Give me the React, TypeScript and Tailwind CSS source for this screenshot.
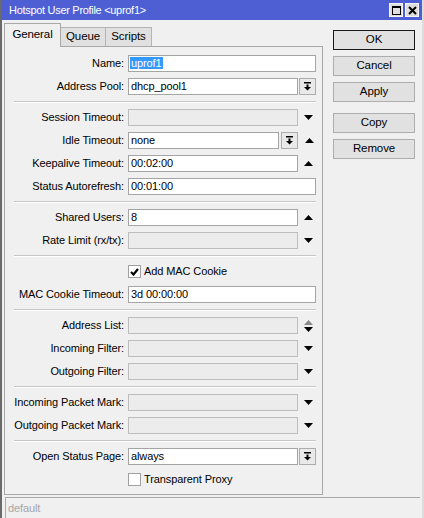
import type { ReactNode } from 'react'

const font = "font-['Liberation_Sans',Arial,sans-serif] text-[11px] tracking-[-0.1px]"

function Tri({ up, color = '#000' }: { up?: boolean; color?: string }) {
  return (
    <svg width="9" height="5" viewBox="0 0 9 5">
      <polygon points={up ? '0,5 9,5 4.5,0' : '0,0 9,0 4.5,5'} fill={color} />
    </svg>
  )
}

function Arrow({ kind }: { kind: 'up' | 'down' | 'both' }) {
  return (
    <div className="ml-[1px] flex h-[17px] w-[18px] flex-col items-center justify-center gap-[2px]">
      {kind === 'up' && <Tri up />}
      {kind === 'down' && <Tri />}
      {kind === 'both' && (
        <>
          <Tri up color="#8a8a8a" />
          <Tri />
        </>
      )}
    </div>
  )
}

function DropBtn({ cls = 'ml-[1px]' }: { cls?: string }) {
  return (
    <div className={`${cls} flex h-[17px] w-[17px] items-center justify-center border border-[#adadad] bg-[#e9e9e9]`}>
      <svg width="7" height="9" viewBox="0 0 7 9">
        <rect x="0" y="0" width="7" height="1.5" fill="#000" />
        <rect x="2.5" y="2.5" width="2" height="3" fill="#000" />
        <polygon points="0,5 7,5 3.5,8.5" fill="#000" />
      </svg>
    </div>
  )
}

function Input({ w, value, empty }: { w: string; value?: ReactNode; empty?: boolean }) {
  return (
    <div
      className={`${w} h-[17px] overflow-hidden whitespace-nowrap border pl-[2px] leading-[15px] ${
        empty ? 'border-[#bdbdbd] bg-[#ececec]' : 'border-[#a5a5a5] bg-white'
      }`}
    >
      {value}
    </div>
  )
}

function Row({ label, children }: { label: string; children: ReactNode }) {
  return (
    <div className="flex h-[17px] items-center">
      <span className="w-[119px] whitespace-nowrap text-right">{label}</span>
      <div className="ml-[4px] flex items-center">{children}</div>
    </div>
  )
}

function Check({ label, checked }: { label: string; checked?: boolean }) {
  return (
    <div className="flex h-[17px] items-center">
      <div className="ml-[123px] flex h-[13px] w-[13px] items-center justify-center border border-[#a0a0a0] bg-white">
        {checked && (
          <svg width="9" height="8" viewBox="0 0 9 8">
            <polyline points="1,4 3.5,6.5 8,1" fill="none" stroke="#000" strokeWidth="2.2" />
          </svg>
        )}
      </div>
      <span className="ml-[3px]">{label}</span>
    </div>
  )
}

function Sep() {
  return <div className="ml-[9px] h-[2px] w-[302px] border-t border-b border-t-[#c6c6c6] border-b-white" />
}

function Btn({ label, def, cls = '' }: { label: string; def?: boolean; cls?: string }) {
  return (
    <div
      className={`${cls} flex h-[20px] w-[82px] items-center justify-center border bg-[#e1e1e1] text-[11.5px] ${
        def ? 'border-[#1a1a1a]' : 'border-[#adadad]'
      }`}
    >
      {label}
    </div>
  )
}

export default function App() {
  return (
    <div className={`${font} flex h-[518px] w-[424px] flex-col border-l-2 border-r-2 border-l-[#6a6a6a] border-r-[#dcdcdc] bg-[#f0f0f0] text-black`}>
      {/* title bar */}
      <div className="flex h-[20px] items-center justify-between bg-[#4d5fd3] pl-[7px] pr-[3px]">
        <span className="tracking-[-0.3px] text-white">Hotspot User Profile &lt;uprof1&gt;</span>
        <div className="flex gap-[2px]">
          <div className="flex h-[14px] w-[14px] items-center justify-center border border-[#f4f4f4] bg-[#dedede]">
            <div className="h-[9px] w-[9px] border border-t-2 border-black" />
          </div>
          <div className="flex h-[14px] w-[14px] items-center justify-center border border-[#f4f4f4] bg-[#dedede]">
            <svg width="9" height="9" viewBox="0 0 9 9">
              <path d="M1 1L8 8M8 1L1 8" stroke="#000" strokeWidth="2" />
            </svg>
          </div>
        </div>
      </div>

      <div className="flex flex-1 pl-[2px] pt-[3px]">
        {/* left: tabs + panel */}
        <div className="w-[319px]">
          <div className="flex h-[23px] items-end text-[11.5px]">
            <div className="relative z-10 mb-[-1px] flex h-[24px] w-[57px] items-center justify-center border border-b-0 border-[#a8a8a8] bg-[#f0f0f0] pb-[2px]">
              General
            </div>
            <div className="flex h-[19px] w-[45px] items-center justify-center border-t border-r border-[#b4b4b4] bg-[#e0e0e0]">
              Queue
            </div>
            <div className="flex h-[19px] w-[46px] items-center justify-center border-t border-r border-[#b4b4b4] bg-[#e0e0e0]">
              Scripts
            </div>
          </div>
          <div className="flex h-[449px] flex-col gap-[6px] border border-[#a8a8a8] pt-[8px]">
            <Row label="Name:">
              <Input
                w="w-[188px] !pl-[1px]"
                value={<span className="bg-[#3399ff] px-[1px] text-white">uprof1</span>}
              />
            </Row>
            <Row label="Address Pool:">
              <Input w="w-[170px]" value="dhcp_pool1" />
              <DropBtn />
            </Row>
            <Sep />
            <Row label="Session Timeout:">
              <Input w="w-[170px]" empty />
              <Arrow kind="down" />
            </Row>
            <Row label="Idle Timeout:">
              <Input w="w-[151px]" value="none" />
              <DropBtn cls="ml-[2px]" />
              <div className="ml-[1px]">
                <Arrow kind="up" />
              </div>
            </Row>
            <Row label="Keepalive Timeout:">
              <Input w="w-[170px]" value="00:02:00" />
              <Arrow kind="up" />
            </Row>
            <Row label="Status Autorefresh:">
              <Input w="w-[188px]" value="00:01:00" />
            </Row>
            <Sep />
            <Row label="Shared Users:">
              <Input w="w-[170px]" value="8" />
              <Arrow kind="up" />
            </Row>
            <Row label="Rate Limit (rx/tx):">
              <Input w="w-[170px]" empty />
              <Arrow kind="down" />
            </Row>
            <Sep />
            <Check label="Add MAC Cookie" checked />
            <Row label="MAC Cookie Timeout:">
              <Input w="w-[188px]" value="3d 00:00:00" />
            </Row>
            <Sep />
            <Row label="Address List:">
              <Input w="w-[170px]" empty />
              <Arrow kind="both" />
            </Row>
            <Row label="Incoming Filter:">
              <Input w="w-[170px]" empty />
              <Arrow kind="down" />
            </Row>
            <Row label="Outgoing Filter:">
              <Input w="w-[170px]" empty />
              <Arrow kind="down" />
            </Row>
            <Sep />
            <Row label="Incoming Packet Mark:">
              <Input w="w-[170px]" empty />
              <Arrow kind="down" />
            </Row>
            <Row label="Outgoing Packet Mark:">
              <Input w="w-[170px]" empty />
              <Arrow kind="down" />
            </Row>
            <Sep />
            <Row label="Open Status Page:">
              <Input w="w-[170px]" value="always" />
              <DropBtn />
            </Row>
            <Check label="Transparent Proxy" />
          </div>
        </div>

        {/* right: buttons */}
        <div className="ml-[10px] flex flex-col gap-[6px] pt-[7px]">
          <Btn label="OK" def />
          <Btn label="Cancel" />
          <Btn label="Apply" />
          <Btn label="Copy" cls="mt-[5px]" />
          <Btn label="Remove" />
        </div>
      </div>

      {/* status bar */}
      <div className="ml-[3px] mr-[2px] flex h-[21px] items-center border-t border-l border-[#a8a8a8] pl-[2px] text-[#a6a6a6]">
        default
      </div>
    </div>
  )
}
